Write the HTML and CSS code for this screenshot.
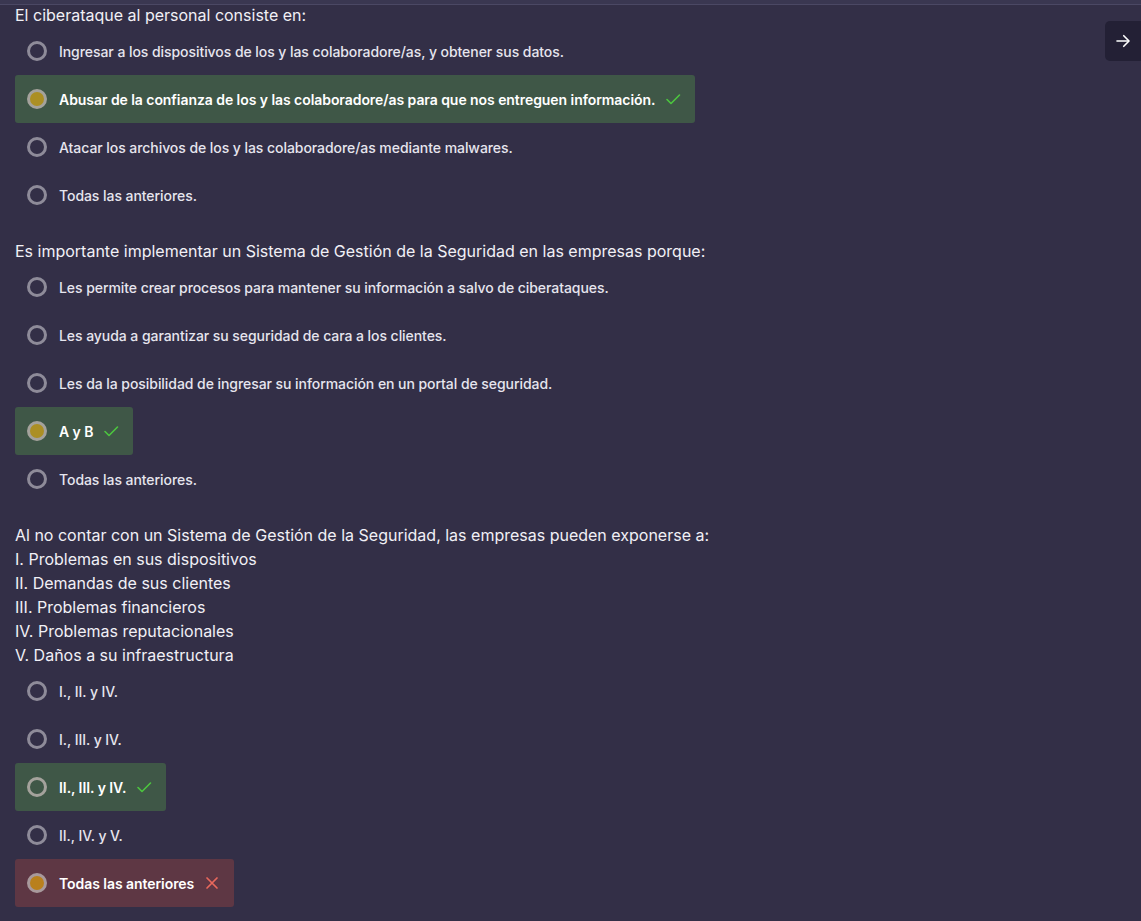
FILE: index.html
```html
<!DOCTYPE html>
<html lang="es">
<head>
<meta charset="utf-8">
<title>Quiz</title>
<link rel="stylesheet" href="styles.css">
</head>
<body>
<div class="topbar"></div>
<button class="next-btn" aria-label="Siguiente">
  <svg width="18" height="18" viewBox="0 0 24 24" fill="none" stroke="#ffffff" stroke-width="2.2" stroke-linecap="round" stroke-linejoin="round"><path d="M4 12h15"/><path d="M13 5l7 7-7 7"/></svg>
</button>
<main class="quiz">
  <section class="question">
    <p class="q-title">El ciberataque al personal consiste en:</p>
    <div class="options">
      <div class="option"><span class="radio"></span><span class="label">Ingresar a los dispositivos de los y las colaboradore/as, y obtener sus datos.</span></div>
      <div class="option correct"><span class="radio checked"></span><span class="label">Abusar de la confianza de los y las colaboradore/as para que nos entreguen información.</span>
        <svg class="mark" width="16" height="16" viewBox="0 0 16 16" fill="none" stroke="#4cc63f" stroke-width="1.6" stroke-linecap="round" stroke-linejoin="round"><path d="M2 8.5l4 4L14.5 4"/></svg></div>
      <div class="option"><span class="radio"></span><span class="label">Atacar los archivos de los y las colaboradore/as mediante malwares.</span></div>
      <div class="option"><span class="radio"></span><span class="label">Todas las anteriores.</span></div>
    </div>
  </section>
  <section class="question">
    <p class="q-title">Es importante implementar un Sistema de Gestión de la Seguridad en las empresas porque:</p>
    <div class="options">
      <div class="option"><span class="radio"></span><span class="label">Les permite crear procesos para mantener su información a salvo de ciberataques.</span></div>
      <div class="option"><span class="radio"></span><span class="label">Les ayuda a garantizar su seguridad de cara a los clientes.</span></div>
      <div class="option"><span class="radio"></span><span class="label">Les da la posibilidad de ingresar su información en un portal de seguridad.</span></div>
      <div class="option correct"><span class="radio checked"></span><span class="label">A y B</span>
        <svg class="mark" width="16" height="16" viewBox="0 0 16 16" fill="none" stroke="#4cc63f" stroke-width="1.6" stroke-linecap="round" stroke-linejoin="round"><path d="M2 8.5l4 4L14.5 4"/></svg></div>
      <div class="option"><span class="radio"></span><span class="label">Todas las anteriores.</span></div>
    </div>
  </section>
  <section class="question">
    <p class="q-title">Al no contar con un Sistema de Gestión de la Seguridad, las empresas pueden exponerse a:<br>I. Problemas en sus dispositivos<br>II. Demandas de sus clientes<br>III. Problemas financieros<br>IV. Problemas reputacionales<br>V. Daños a su infraestructura</p>
    <div class="options">
      <div class="option"><span class="radio"></span><span class="label">I., II. y IV.</span></div>
      <div class="option"><span class="radio"></span><span class="label">I., III. y IV.</span></div>
      <div class="option correct"><span class="radio"></span><span class="label">II., III. y IV.</span>
        <svg class="mark" width="16" height="16" viewBox="0 0 16 16" fill="none" stroke="#4cc63f" stroke-width="1.6" stroke-linecap="round" stroke-linejoin="round"><path d="M2 8.5l4 4L14.5 4"/></svg></div>
      <div class="option"><span class="radio"></span><span class="label">II., IV. y V.</span></div>
      <div class="option wrong"><span class="radio checked wrong-fill"></span><span class="label">Todas las anteriores</span>
        <svg class="mark" width="16" height="16" viewBox="0 0 16 16" fill="none" stroke="#e8685c" stroke-width="1.7" stroke-linecap="round"><path d="M3 3l10 10M13 3L3 13"/></svg></div>
    </div>
  </section>
</main>
</body>
</html>
```
FILE: styles.css
```css
html, body {
  margin: 0;
  padding: 0;
  background: #332f47;
}
body {
  font-family: Inter, "Noto Sans", "Liberation Sans", sans-serif;
  color: #ecebf2;
  min-height: 921px;
}
.topbar {
  position: fixed;
  top: 0;
  left: 0;
  right: 0;
  height: 4px;
  background: #3a3751;
  border-bottom: 1px solid #4b4864;
  z-index: 2;
}
.next-btn {
  position: fixed;
  top: 21px;
  right: -4px;
  width: 40px;
  height: 40px;
  border: none;
  border-radius: 5px;
  background: #232035;
  display: flex;
  align-items: center;
  justify-content: center;
  padding: 0 4px 0 0;
}
.quiz {
  padding: 3px 15px 0;
  display: flex;
  flex-direction: column;
  gap: 20px;
}
.q-title {
  margin: 0;
  font-size: 16px;
  line-height: 24px;
  font-weight: 400;
  color: #f1f0f6;
}
.options {
  display: flex;
  flex-direction: column;
  align-items: flex-start;
}
.option {
  display: flex;
  align-items: center;
  height: 48px;
  padding: 0 14px 0 12px;
  border-radius: 3px;
  box-sizing: border-box;
  font-size: 14px;
  font-weight: 500;
  letter-spacing: -0.06px;
  color: #e6e5ee;
}
.option.correct {
  background: #3f5747;
}
.option.wrong {
  background: #5e3744;
}
.option.correct .label,
.option.wrong .label {
  color: #ffffff;
  font-weight: 600;
}
.radio {
  width: 20px;
  height: 20px;
  box-sizing: border-box;
  border: 3px solid #8e8b99;
  border-radius: 50%;
  flex: none;
  margin-right: 12px;
}
.option.correct .radio {
  border-color: #a4a29c;
}
.radio.checked {
  background: #ab8f24;
  border-color: #a6a39b;
}
.radio.wrong-fill {
  background: #b9801d;
  border-color: #a8999c;
}
.label {
  white-space: nowrap;
}
.mark {
  margin-left: 10px;
  flex: none;
}
```
